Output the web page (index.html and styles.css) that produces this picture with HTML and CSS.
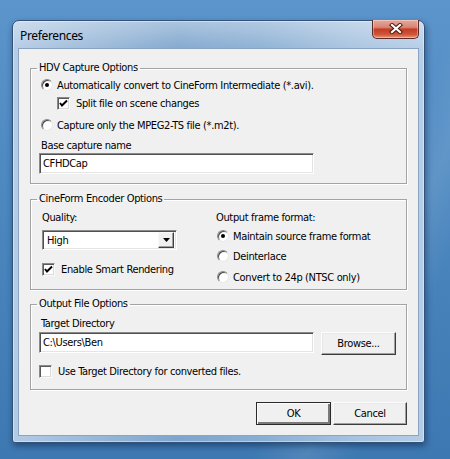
FILE: index.html
```html
<!DOCTYPE html>
<html>
<head>
<meta charset="utf-8">
<link rel="stylesheet" href="styles.css">
</head>
<body>
<div class="desktop">
  <div class="window">
    <div class="titlebar">
      <span class="title">Preferences</span>
      <div class="close"><svg class="xicon" viewBox="0 0 14 11" width="14" height="11"><path d="M3 2 L11 9 M11 2 L3 9" stroke="#4a1a14" stroke-width="4.2" stroke-linecap="square" fill="none"/><path d="M3 2 L11 9 M11 2 L3 9" stroke="#ffffff" stroke-width="2.2" stroke-linecap="square" fill="none"/></svg></div>
    </div>
    <div class="client">
      <fieldset class="group g1">
        <legend>HDV Capture Options</legend>
        <div class="row r1"><span class="radio on"></span><span>Automatically convert to CineForm Intermediate (*.avi).</span></div>
        <div class="row r2 indent"><span class="check on"><svg viewBox="0 0 11 11" width="11" height="11"><polyline points="2,5 4,7.5 9,2.5" fill="none" stroke="#000" stroke-width="2"/></svg></span><span>Split file on scene changes</span></div>
        <div class="row r3"><span class="radio"></span><span>Capture only the MPEG2-TS file (*.m2t).</span></div>
        <div class="lbl l1">Base capture name</div>
        <div class="edit e1">CFHDCap</div>
      </fieldset>

      <fieldset class="group g2">
        <legend>CineForm Encoder Options</legend>
        <div class="cols">
          <div class="col left">
            <div class="lbl l2">Quality:</div>
            <div class="combo"><span class="ctext">High</span><span class="cbtn"><svg viewBox="0 0 7 4" width="7" height="4"><polygon points="0,0 7,0 3.5,4" fill="#000"/></svg></span></div>
            <div class="row r4"><span class="check on"><svg viewBox="0 0 11 11" width="11" height="11"><polyline points="2,5 4,7.5 9,2.5" fill="none" stroke="#000" stroke-width="2"/></svg></span><span>Enable Smart Rendering</span></div>
          </div>
          <div class="col right">
            <div class="lbl l2">Output frame format:</div>
            <div class="row r5"><span class="radio on"></span><span>Maintain source frame format</span></div>
            <div class="row r5"><span class="radio"></span><span>Deinterlace</span></div>
            <div class="row r5 r5b"><span class="radio"></span><span>Convert to 24p (NTSC only)</span></div>
          </div>
        </div>
      </fieldset>

      <fieldset class="group g3">
        <legend>Output File Options</legend>
        <div class="lbl l3">Target Directory</div>
        <div class="dirrow">
          <div class="edit e2">C:\Users\Ben</div>
          <div class="btn browse">Browse...</div>
        </div>
        <div class="row r6"><span class="check"></span><span>Use Target Directory for converted files.</span></div>
      </fieldset>

      <div class="buttons">
        <div class="btn ok">OK</div>
        <div class="btn cancel">Cancel</div>
      </div>
    </div>
  </div>
</div>
</body>
</html>
```
FILE: styles.css
```css
* { box-sizing: border-box; }
html, body { margin: 0; padding: 0; }
body {
  width: 450px;
  height: 459px;
  overflow: hidden;
}
.desktop {
  width: 450px;
  height: 459px;
  padding: 20px 0 0 12px;
  background:
    linear-gradient(115deg, rgba(255,255,255,0) 70%, rgba(255,255,255,0.10) 78%, rgba(255,255,255,0) 86%),
    linear-gradient(180deg, #5b95cb 0%, #4d88c0 40%, #3d78b2 100%);
}
.window {
  width: 413px;
  height: 423px;
  border: 1px solid #33527a;
  border-radius: 7px 7px 3px 3px;
  background:
    linear-gradient(180deg, rgba(255,255,255,0.35) 0px, rgba(255,255,255,0.05) 28px, rgba(255,255,255,0) 100%),
    linear-gradient(90deg, #b3cbe5 0%, #a3bfdd 12%, #7ea5cd 40%, #89aed3 60%, #a9c4e0 85%, #b4cce6 100%);
  box-shadow: 0 0 0 1px rgba(255,255,255,0.4) inset, 1px 3px 6px rgba(0,20,50,0.45);
  display: flex;
  flex-direction: column;
  padding: 0 5px 6px 5px;
}
.titlebar {
  height: 27px;
  position: relative;
  display: flex;
  align-items: center;
}
.title {
  font-family: "Noto Sans", sans-serif;
  font-size: 12px;
  letter-spacing: -0.35px;
  color: #000;
  margin-left: 2px;
  margin-top: 2px;
}
.close {
  position: absolute;
  right: 0px;
  top: -1px;
  width: 47px;
  height: 19px;
  border: 1px solid #5b2a2a;
  border-top: none;
  border-radius: 0 0 5px 5px;
  background: linear-gradient(180deg, #e6a99b 0%, #d98674 40%, #c43c24 52%, #cf5538 80%, #e29a7a 100%);
  box-shadow: 0 0 0 1px rgba(255,255,255,0.35) inset;
  display: flex;
  align-items: center;
  justify-content: center;
}
.xicon { display: block; margin-top: -1px; }
.client {
  flex: 1;
  background: #f0f0f0;
  border: 1px solid #8aa4c2;
  padding: 12px 12px 0 11px;
  font-family: "DejaVu Sans Condensed", "DejaVu Sans", sans-serif;
  font-stretch: condensed;
  font-size: 11px;
  letter-spacing: -0.35px;
  color: #000;
}
.group {
  margin: 0;
  padding: 0 0 0 9px;
  border: 1px solid #a3a3a3;
  box-shadow: 1px 1px 0 #fff, inset 1px 1px 0 #fff;
  min-width: 0;
  width: 377px;
}
.group legend {
  padding: 0 2px;
  margin-left: -3px;
  line-height: 14px;
  height: 14px;
}
.g1 { height: 123px; }
.g2 { height: 98px; margin-top: 8px; }
.g3 { height: 93px; margin-top: 7px; }

.row {
  display: flex;
  align-items: center;
  white-space: nowrap;
}
.row .radio { margin-left: 1px; margin-right: 4px; }
.row .check { margin-right: 6px; }
.r1 { height: 20px; }
.r2 { height: 16px; }
.indent { padding-left: 17px; }
.r3 { height: 20px; margin-top: 4px; }
.lbl { display: flex; align-items: center; white-space: nowrap; }
.l1 { height: 16px; margin-top: 2px; padding-left: 1px; }

.radio {
  width: 12px;
  height: 12px;
  border-radius: 50%;
  background: #fff;
  border: 1px solid;
  border-color: #8a8a8a #e8e8e8 #e8e8e8 #8a8a8a;
  box-shadow: inset 1px 1px 0 #4a4a4a;
  position: relative;
  flex: none;
}
.radio.on::after {
  content: "";
  position: absolute;
  left: 3px;
  top: 3px;
  width: 4px;
  height: 4px;
  border-radius: 50%;
  background: #000;
}
.check {
  width: 13px;
  height: 13px;
  background: #fff;
  border: 1px solid;
  border-color: #8a8a8a #fafafa #fafafa #8a8a8a;
  box-shadow: inset 1px 1px 0 #5a5a5a, inset -1px -1px 0 #dcdcdc;
  display: flex;
  align-items: center;
  justify-content: center;
  flex: none;
}
.check svg { display: block; }

.edit {
  height: 21px;
  background: #fff;
  border: 1px solid;
  border-color: #8a8a8a #ffffff #ffffff #8a8a8a;
  box-shadow: inset 1px 1px 0 #505050, inset -1px -1px 0 #e4e4e4;
  padding-left: 3px;
  display: flex;
  align-items: center;
  white-space: nowrap;
}
.e1 { width: 275px; margin-left: -1px; }

.cols { display: flex; }
.col.left { width: 176px; padding-left: 2px; }
.col.right { flex: 1; }
.l2 { height: 18px; margin-top: 2px; }
.combo {
  margin-top: 4px;
  width: 135px;
  height: 20px;
  background: #fff;
  border: 1px solid;
  border-color: #8a8a8a #ffffff #ffffff #8a8a8a;
  box-shadow: inset 1px 1px 0 #505050, inset -1px -1px 0 #e4e4e4;
  display: flex;
  align-items: center;
  padding: 2px 2px 2px 4px;
}
.ctext { flex: 1; }
.cbtn {
  width: 16px;
  height: 16px;
  background: #f0f0f0;
  border: 1px solid;
  border-color: #fafafa #404040 #404040 #fafafa;
  box-shadow: inset -1px -1px 0 #a0a0a0;
  display: flex;
  align-items: center;
  justify-content: center;
}
.cbtn svg { display: block; }
.r4 { height: 18px; margin-top: 10px; }
.r5 { height: 20px; }
.r5b { margin-top: 1px; }

.l3 { height: 18px; margin-top: 3px; padding-left: 1px; }
.dirrow { display: flex; align-items: flex-start; margin-left: -1px; }
.e2 { width: 275px; }
.btn {
  height: 23px;
  background: #f0f0f0;
  border: 1px solid;
  border-color: #fcfcfc #3c3c3c #3c3c3c #fcfcfc;
  box-shadow: inset -1px -1px 0 #a0a0a0, inset 1px 1px 0 #e8e8e8;
  display: flex;
  align-items: center;
  justify-content: center;
  white-space: nowrap;
}
.browse { width: 75px; margin-left: 7px; }
.r6 { height: 18px; margin-top: 7px; margin-left: -1px; }

.buttons {
  display: flex;
  justify-content: flex-end;
  margin-top: 12px;
  margin-right: -1px;
}
.ok {
  width: 75px;
  border-color: #2a2a2a;
  box-shadow: inset 1px 1px 0 #fcfcfc, inset -2px -2px 0 #7a7a7a;
}
.cancel { width: 74px; margin-left: 2px; }
```
